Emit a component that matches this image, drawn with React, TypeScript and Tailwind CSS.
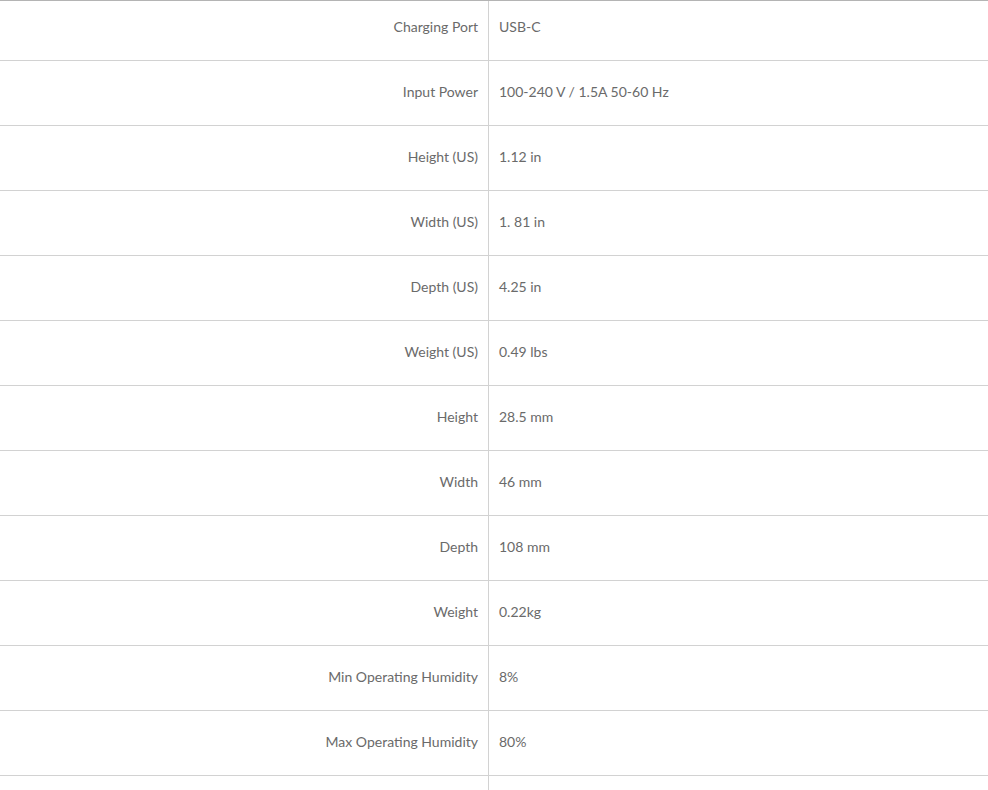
const specs = [
  { label: "Charging Port", value: "USB-C" },
  { label: "Input Power", value: "100-240 V / 1.5A 50-60 Hz" },
  { label: "Height (US)", value: "1.12 in" },
  { label: "Width (US)", value: "1. 81 in" },
  { label: "Depth (US)", value: "4.25 in" },
  { label: "Weight (US)", value: "0.49 lbs" },
  { label: "Height", value: "28.5 mm" },
  { label: "Width", value: "46 mm" },
  { label: "Depth", value: "108 mm" },
  { label: "Weight", value: "0.22kg" },
  { label: "Min Operating Humidity", value: "8%" },
  { label: "Max Operating Humidity", value: "80%" },
  { label: "", value: "" },
];

export default function App() {
  return (
    <div className="h-[790px] w-[988px] overflow-hidden bg-white font-['Lato','Liberation_Sans',sans-serif] text-[14px] text-[#6a6a6a]">
      <div className="border-t border-[#b4b4b4]">
        {specs.map((spec, i) => (
          <div
            key={i}
            className={`flex border-b border-[#d2d2d2] ${i === 0 ? "h-[60px]" : "h-[65px]"}`}
          >
            <div
              className={`flex w-[489px] shrink-0 items-center justify-end border-r border-[#d2d2d2] pr-[10px] ${i === 0 ? "pb-[8px]" : "pb-[4px]"}`}
            >
              {spec.label}
            </div>
            <div className={`flex items-center pl-[10px] ${i === 0 ? "pb-[8px]" : "pb-[4px]"}`}>
              {spec.value}
            </div>
          </div>
        ))}
      </div>
    </div>
  );
}
